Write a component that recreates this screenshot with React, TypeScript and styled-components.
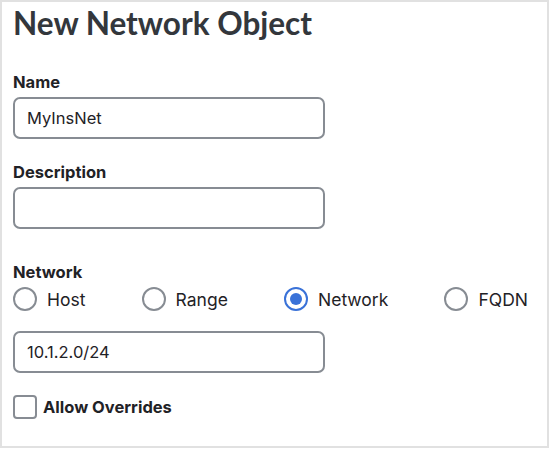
import styled, { createGlobalStyle } from 'styled-components';

const GlobalStyle = createGlobalStyle`
  html, body {
    margin: 0;
    padding: 0;
    background: #ffffff;
  }
  * {
    box-sizing: border-box;
  }
`;

const Panel = styled.div`
  width: 549px;
  height: 448px;
  border: 2px solid #e1e1e1;
  padding: 0 19px 0 11px;
  background: #fff;
  font-family: Inter, 'Noto Sans', sans-serif;
  color: #1f2226;
`;

const Title = styled.h1`
  margin: 0;
  padding-top: 2px;
  font-family: Lato, 'Noto Sans', sans-serif;
  font-weight: 700;
  font-size: 31.5px;
  line-height: 38px;
  color: #33373c;
`;

const Field = styled.div<{ $top: number }>`
  margin-top: ${(p) => p.$top}px;
  display: flex;
  flex-direction: column;
`;

const Label = styled.label`
  font-size: 16.5px;
  font-weight: 700;
  line-height: 20px;
  margin-bottom: 5px;
  color: #1f2226;
`;

const TextInput = styled.input`
  width: 312px;
  height: 42px;
  border: 2px solid #878c93;
  border-radius: 7px;
  padding: 0 12px;
  font-family: Inter, 'Noto Sans', sans-serif;
  font-size: 16.5px;
  color: #1f2226;
  outline: none;
  background: #fff;
`;

const RadioRow = styled.div`
  display: flex;
  justify-content: space-between;
  align-items: center;
  margin-top: 0;
`;

const RadioOption = styled.label`
  display: flex;
  align-items: center;
  gap: 10px;
  font-size: 17.5px;
  color: #1f2226;
`;

const RadioCircle = styled.span<{ $checked?: boolean }>`
  width: 24px;
  height: 24px;
  border-radius: 50%;
  border: 2px solid ${(p) => (p.$checked ? '#3a72d8' : '#878c93')};
  display: flex;
  align-items: center;
  justify-content: center;
  &::after {
    content: '';
    width: 12px;
    height: 12px;
    border-radius: 50%;
    background: ${(p) => (p.$checked ? '#3a72d8' : 'transparent')};
  }
`;

const CheckRow = styled.label`
  display: flex;
  align-items: center;
  gap: 6px;
  margin-top: 22px;
  font-size: 16.5px;
  font-weight: 700;
  color: #1f2226;
`;

const CheckBox = styled.span`
  width: 24px;
  height: 24px;
  border: 2px solid #878c93;
  border-radius: 4px;
`;

const options = [
  { label: 'Host', checked: false },
  { label: 'Range', checked: false },
  { label: 'Network', checked: true },
  { label: 'FQDN', checked: false },
];

export default function App() {
  return (
    <>
      <GlobalStyle />
      <Panel>
        <Title>New Network Object</Title>
        <Field $top={30}>
          <Label>Name</Label>
          <TextInput defaultValue="MyInsNet" />
        </Field>
        <Field $top={23}>
          <Label>Description</Label>
          <TextInput defaultValue="" />
        </Field>
        <Field $top={33}>
          <Label>Network</Label>
          <RadioRow>
            {options.map((o) => (
              <RadioOption key={o.label}>
                <RadioCircle $checked={o.checked} />
                {o.label}
              </RadioOption>
            ))}
          </RadioRow>
        </Field>
        <Field $top={20}>
          <TextInput defaultValue="10.1.2.0/24" />
        </Field>
        <CheckRow>
          <CheckBox />
          Allow Overrides
        </CheckRow>
      </Panel>
    </>
  );
}
